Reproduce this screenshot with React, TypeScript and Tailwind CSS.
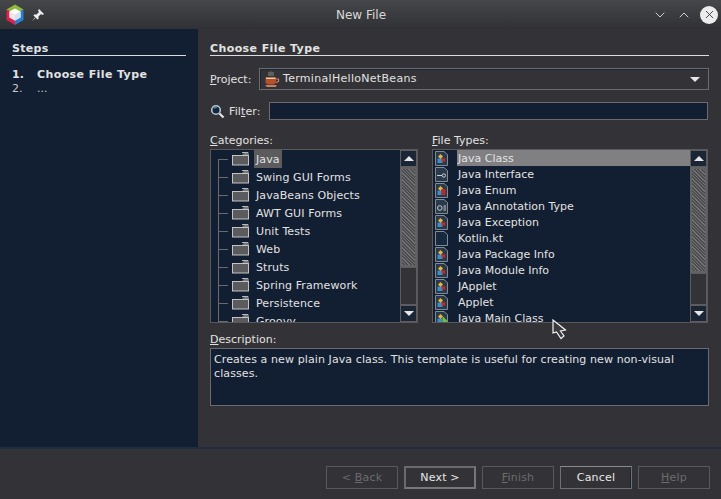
import { ChevronDown, ChevronUp, X } from "lucide-react";

const categories = [
  "Java",
  "Swing GUI Forms",
  "JavaBeans Objects",
  "AWT GUI Forms",
  "Unit Tests",
  "Web",
  "Struts",
  "Spring Framework",
  "Persistence",
  "Groovy",
];

const fileTypes = [
  { label: "Java Class", icon: "class" },
  { label: "Java Interface", icon: "iface" },
  { label: "Java Enum", icon: "enum" },
  { label: "Java Annotation Type", icon: "anno" },
  { label: "Java Exception", icon: "class" },
  { label: "Kotlin.kt", icon: "blank" },
  { label: "Java Package Info", icon: "class" },
  { label: "Java Module Info", icon: "class" },
  { label: "JApplet", icon: "class" },
  { label: "Applet", icon: "class" },
  { label: "Java Main Class", icon: "main" },
];

function Logo() {
  return (
    <svg width="20" height="22" viewBox="0 0 20 22">
      <path d="M10 0.5 L18.5 5.5 L10 10.5 L1.5 5.5Z" fill="#8dbb3a" />
      <path d="M1.5 5.5 L10 10.5 L10 21 L1.5 16Z" fill="#e0214f" />
      <path d="M18.5 5.5 L10 10.5 L10 21 L18.5 16Z" fill="#2a7fd0" />
      <path d="M10 4.5 L15.5 7.5 L15.5 13.5 L10 16.5 L4.5 13.5 L4.5 7.5Z" fill="#fbfbfb" />
      <path d="M10 10.5 L15.5 7.5 L15.5 13.5 L10 16.5Z" fill="#d6e3ef" />
      <path d="M4.5 7.5 L10 10.5 L10 16.5 L4.5 13.5Z" fill="#f3e6e8" />
    </svg>
  );
}

function Pin() {
  return (
    <svg width="14" height="14" viewBox="0 0 14 14">
      <path d="M8 1 L13 6 L11.5 7 L10 6 L7.5 8.5 L7.5 11 L6.5 11.5 L2.5 7.5 L3 6.5 L5.5 6.5 L8 4 L7 2.5Z" fill="#eeeeee" />
      <path d="M4 9.5 L1 13 L4.5 10Z" fill="#eeeeee" />
    </svg>
  );
}

function Magnifier() {
  return (
    <svg width="15" height="15" viewBox="0 0 15 15">
      <circle cx="6" cy="6" r="4.3" fill="#12263c" stroke="#b9c6d2" strokeWidth="1.6" />
      <path d="M4 4.5 A3 3 0 0 1 7 3.5" stroke="#4f86ad" strokeWidth="1.2" fill="none" />
      <path d="M9.5 9.5 L13.5 13.5" stroke="#e8e8e8" strokeWidth="2.2" />
    </svg>
  );
}

function Coffee() {
  return (
    <svg width="16" height="17" viewBox="0 0 16 17">
      <path d="M5 1 V5 M7 0.5 V5 M9 1 V5" stroke="#8a8a8a" strokeWidth="1" />
      <path d="M1.5 6.5 H12 V10.5 Q12 13.5 8.5 13.5 H5 Q1.5 13.5 1.5 10.5Z" fill="#b5502c" />
      <path d="M2 6.5 H11.5 V8 H2Z" fill="#e9c3a4" />
      <path d="M12 8 H14.5 V10.5 L12 11.5" stroke="#c9805c" strokeWidth="1.2" fill="none" />
      <path d="M1 14 H13 L11.5 16 H3Z" fill="#c9805c" />
    </svg>
  );
}

function Folder() {
  return (
    <svg width="17" height="14" viewBox="0 0 17 14" className="shrink-0">
      <path d="M10 0.5 H16 V3" stroke="#b8b8b8" strokeWidth="1" fill="#77777a" />
      <rect x="0.5" y="3.5" width="16" height="9.5" fill="#5b5b5e" stroke="#c4c4c4" />
      <path d="M1 3 H10 L12 1 H16 V3" fill="#77777a" />
    </svg>
  );
}

function FileIcon({ kind }: { kind: string }) {
  return (
    <svg width="13" height="15" viewBox="0 0 13 15" className="shrink-0">
      <path d="M0.5 0.5 H9 L12.5 3.5 V14.5 H0.5Z" fill={kind === "blank" ? "#16293e" : "#2b3a4b"} stroke="#7f8b97" />
      {kind === "class" && (
        <>
          <rect x="2.5" y="7.5" width="5" height="4.5" fill="#3f8ec6" />
          <path d="M5.5 3 L8 5.5 L5.5 8 L3 5.5Z" fill="#e5b63a" />
          <circle cx="8.5" cy="9" r="2" fill="#b92a2c" />
        </>
      )}
      {kind === "enum" && (
        <>
          <rect x="2.5" y="7.5" width="4" height="4.5" fill="#3f8ec6" />
          <path d="M5.5 3 L8 5.5 L5.5 8 L3 5.5Z" fill="#e5b63a" />
          <rect x="6.5" y="6" width="4" height="6" fill="#b92a2c" />
        </>
      )}
      {kind === "iface" && (
        <>
          <path d="M2 8.5 H7" stroke="#c9ced4" />
          <circle cx="8.8" cy="8.5" r="1.7" fill="none" stroke="#c9ced4" />
        </>
      )}
      {kind === "anno" && (
        <>
          <circle cx="4.8" cy="9" r="2.3" fill="none" stroke="#c3cad1" />
          <path d="M8.5 7 H11 M8.5 9 H11 M8.5 11 H11" stroke="#c3cad1" />
        </>
      )}
      {kind === "main" && (
        <>
          <rect x="2.5" y="7.5" width="5" height="4.5" fill="#3f8ec6" />
          <path d="M5.5 3 L8 5.5 L5.5 8 L3 5.5Z" fill="#e5b63a" />
          <path d="M7.5 5 L12.5 10 L7.5 14Z" fill="#6cc23a" />
        </>
      )}
    </svg>
  );
}

function Scrollbar({ thumb, track }: { thumb: string; track: string }) {
  return (
    <div className="flex w-[17px] shrink-0 flex-col bg-[#333236]">
      <div className="flex h-[17px] shrink-0 items-center justify-center border border-[#5c5c5f] bg-[#1a2536]">
        <div className="h-0 w-0 border-x-[5px] border-b-[5px] border-x-transparent border-b-[#e6e6e6]" />
      </div>
      <div
        className={`${thumb} shrink-0 border-2 border-[#626265] bg-[repeating-linear-gradient(45deg,#727275_0,#727275_1px,#4c4c4f_1px,#4c4c4f_2.4px)]`}
      />
      <div className={`${track} shrink-0 border border-[#5c5c5f] bg-[#333236]`} />
      <div className="flex h-[17px] shrink-0 items-center justify-center border border-[#5c5c5f] bg-[#1a2536]">
        <div className="h-0 w-0 border-x-[5px] border-t-[5px] border-x-transparent border-t-[#e6e6e6]" />
      </div>
    </div>
  );
}

function WizardButton({
  prefix,
  mnemonic,
  rest,
  disabled,
  variant,
}: {
  prefix?: string;
  mnemonic?: string;
  rest: string;
  disabled?: boolean;
  variant?: "default" | "cancel";
}) {
  const frame =
    variant === "default"
      ? "border-2 border-[#77777a] border-l-[#6a6a6d] border-t-[#6a6a6d]"
      : variant === "cancel"
        ? "border border-[#6f6f72] border-t-[#8a8a8c] shadow-[inset_-1px_0_0_#162338]"
        : "border border-[#59595c]";
  return (
    <div
      className={`flex h-[23px] w-[72px] items-center justify-center pt-[1px] text-[11px] tracking-[0.2px] ${frame} ${
        disabled ? "text-[#6c6c6f]" : "text-[#e8e8e8]"
      }`}
    >
      <span className="whitespace-pre">
        {prefix}
        {mnemonic && <span className="underline">{mnemonic}</span>}
        {rest}
      </span>
    </div>
  );
}

export default function App() {
  return (
    <div className="relative flex h-[499px] w-[721px] flex-col overflow-hidden bg-[#333236] font-['DejaVu_Sans',sans-serif] text-[11px] text-[#e2e2e2]">
      {/* TITLE BAR */}
      <div className="relative flex h-[29px] shrink-0 items-center bg-[linear-gradient(#46474b,#303135)] pl-[5px]">
        <Logo />
        <div className="ml-[6px]">
          <Pin />
        </div>
        <div className="flex-1 pl-[25px] text-center text-[12px] text-[#d8d8d8]">New File</div>
        <div className="mr-[3px] flex items-center">
          <ChevronDown size={16} strokeWidth={1.3} className="mr-[8px] text-[#e4e4e4]" />
          <ChevronUp size={16} strokeWidth={1.3} className="mr-[8px] text-[#e4e4e4]" />
          <div className="flex h-[18px] w-[18px] items-center justify-center rounded-full bg-[#ececec]">
            <X size={13} strokeWidth={1.6} className="text-[#333]" />
          </div>
        </div>
      </div>

      <div className="flex h-[418px] shrink-0">
        {/* STEPS */}
        <div className="w-[198px] shrink-0 bg-[#121e31] px-[12px] pt-[13px]">
          <div className="border-b border-[#dcdcdc] text-[11px] leading-[13px] font-bold tracking-[0.3px]">
            Steps
          </div>
          <div className="mt-[12px] flex leading-[14px] font-bold">
            <span className="w-[25px]">1.</span>
            <span className="tracking-[0.4px]">Choose File Type</span>
          </div>
          <div className="flex leading-[14px] text-[#c8c8c8]">
            <span className="w-[25px]">2.</span>
            <span>...</span>
          </div>
        </div>

        {/* MAIN */}
        <div className="flex-1 pl-[12px] pr-[12px] pt-[13px]">
          <div className="border-b border-[#dcdcdc] text-[11px] leading-[13px] font-bold tracking-[0.4px]">
            Choose File Type
          </div>

          <div className="mt-[12px] flex h-[23px] items-start">
            <span className="w-[49px] shrink-0 pt-[5px] leading-[14px]">
              <span className="underline">P</span>roject:
            </span>
            <div className="flex h-[22px] w-[450px] items-center border border-[#6b6b6e] pl-[4px] pr-[8px] shadow-[inset_1px_1px_0_#1a2536]">
              <Coffee />
              <span className="ml-[3px] flex-1 pt-[1px] tracking-[0.3px]">TerminalHelloNetBeans</span>
              <div className="h-0 w-0 border-x-[5px] border-t-[5px] border-x-transparent border-t-[#e6e6e6]" />
            </div>
          </div>

          <div className="mt-[11px] flex h-[18px] items-center">
            <Magnifier />
            <span className="ml-[4px] w-[40px] shrink-0 pt-[3px] tracking-[0.1px]">
              Fil<span className="underline">t</span>er:
            </span>
            <div className="h-[18px] w-[439px] border border-[#6b6b6e] bg-[#121e31]" />
          </div>

          <div className="mt-[13px] flex gap-[14px]">
            <div className="w-[208px]">
              <div className="h-[16px] leading-[16px]">
                <span className="underline">C</span>ategories:
              </div>
              <div className="flex h-[174px] border border-[#59595c] bg-[#121e31]">
                <div className="relative flex-1 overflow-hidden">
                  <div className="absolute bottom-0 left-[7px] top-[9px] w-px bg-[#6a6a6d]" />
                  {categories.map((name, i) => (
                    <div key={name} className="flex h-[18px] items-center pl-[7px]">
                      <div className="h-px w-[10px] shrink-0 bg-[#6a6a6d]" />
                      <div className="ml-[4px]">
                        <Folder />
                      </div>
                      <span
                        className={`ml-[5px] h-[18px] px-[2px] pt-[1px] leading-[18px] tracking-[0.1px] ${i === 0 ? "bg-[#5c5c5f]" : ""}`}
                      >
                        {name}
                      </span>
                    </div>
                  ))}
                </div>
                <Scrollbar thumb="h-[100px]" track="h-[38px]" />
              </div>
            </div>

            <div className="w-[276px]">
              <div className="h-[16px] leading-[16px]">
                <span className="underline">F</span>ile Types:
              </div>
              <div className="flex h-[174px] border border-[#59595c] bg-[#121e31]">
                <div className="flex-1 overflow-hidden">
                  {fileTypes.map((t, i) => (
                    <div key={t.label} className="flex h-[16px] items-center pl-[2px]">
                      <FileIcon kind={t.icon} />
                      <span
                        className={`ml-[9px] h-[16px] pl-[1px] pt-[1px] leading-[16px] ${i === 0 ? "flex-1 bg-[#808083]" : ""}`}
                      >
                        {t.label}
                      </span>
                    </div>
                  ))}
                </div>
                <Scrollbar thumb="h-[106px]" track="h-[32px]" />
              </div>
            </div>
          </div>

          <div className="mt-[9px] h-[16px] leading-[16px]">
            <span className="underline">D</span>escription:
          </div>
          <div className="h-[58px] border border-[#6b6b6e] bg-[#121e31] px-[3px] pt-[4px] leading-[14px] tracking-[0.1px]">
            Creates a new plain Java class. This template is useful for creating new non-visual classes.
          </div>
        </div>
      </div>

      {/* BUTTONS */}
      <div className="flex flex-1 items-start justify-end gap-[6px] border-t-2 border-[#1f2c40] pr-[11px] pt-[17px]">
        <WizardButton prefix="< " mnemonic="B" rest="ack" disabled />
        <WizardButton rest="Next >" variant="default" />
        <WizardButton mnemonic="F" rest="inish" disabled />
        <WizardButton rest="Cancel" variant="cancel" />
        <WizardButton mnemonic="H" rest="elp" disabled />
      </div>

      {/* mouse cursor */}
      <svg width="15" height="21" viewBox="0 0 15 21" className="absolute left-[552px] top-[319px]">
        <path d="M1 1 L1 14 L4.5 13 L9 19.5 L12 17 L8.5 12 L13.5 11Z" fill="#3a3a3c" stroke="#f2f2f2" strokeWidth="1.2" />
      </svg>
    </div>
  );
}
